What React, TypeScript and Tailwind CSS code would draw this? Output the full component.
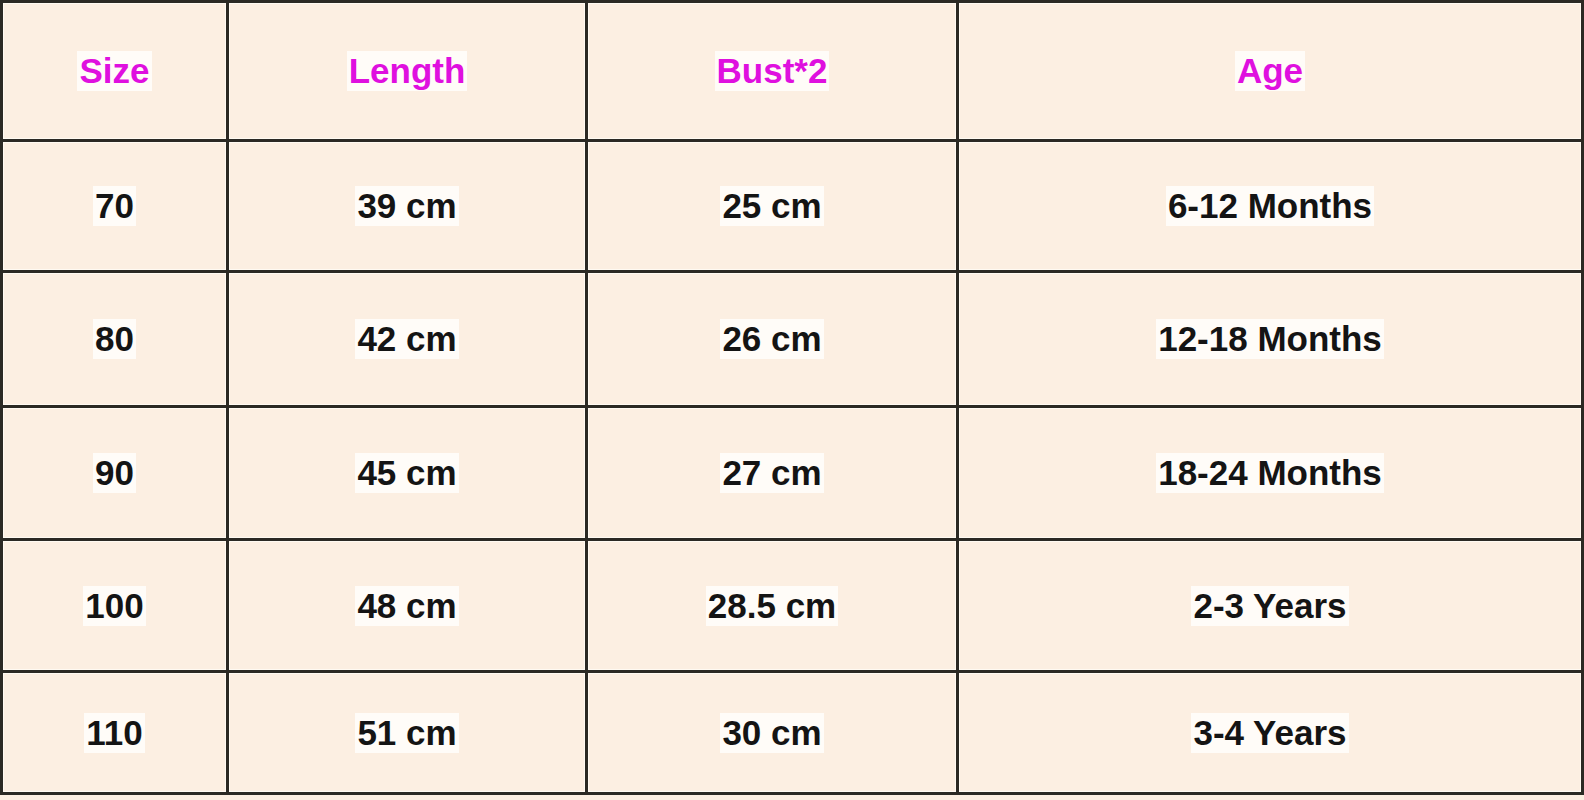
import React from 'react';

const header = ['Size', 'Length', 'Bust*2', 'Age'];

const rows = [
  ['70', '39 cm', '25 cm', '6-12 Months'],
  ['80', '42 cm', '26 cm', '12-18 Months'],
  ['90', '45 cm', '27 cm', '18-24 Months'],
  ['100', '48 cm', '28.5 cm', '2-3 Years'],
  ['110', '51 cm', '30 cm', '3-4 Years'],
];

const Cell: React.FC<{ text: string; head?: boolean }> = ({ text, head }) => (
  <div className="flex items-center justify-center bg-[#fcefe2] shadow-[inset_0_0_0_1px_#fffaf2]">
    <span
      className={
        'bg-[#fffcf8] px-[2px] text-[35px] font-bold leading-[40px] ' +
        (head ? 'text-[#df10df]' : 'text-[#141414]')
      }
    >
      {text}
    </span>
  </div>
);

export default function App() {
  return (
    <div className="min-h-[800px] w-[1584px] bg-[#fcefe2] font-['Liberation_Sans',Arial,sans-serif]">
      <div className="grid grid-cols-[223px_356px_368px_622px] grid-rows-[136px_128px_132px_130px_129px_119px] gap-[3px] bg-[#2b2924] p-[3px]">
        {header.map((h) => (
          <Cell key={h} text={h} head />
        ))}
        {rows.map((r, i) => r.map((c, j) => <Cell key={i + '-' + j} text={c} />))}
      </div>
    </div>
  );
}
